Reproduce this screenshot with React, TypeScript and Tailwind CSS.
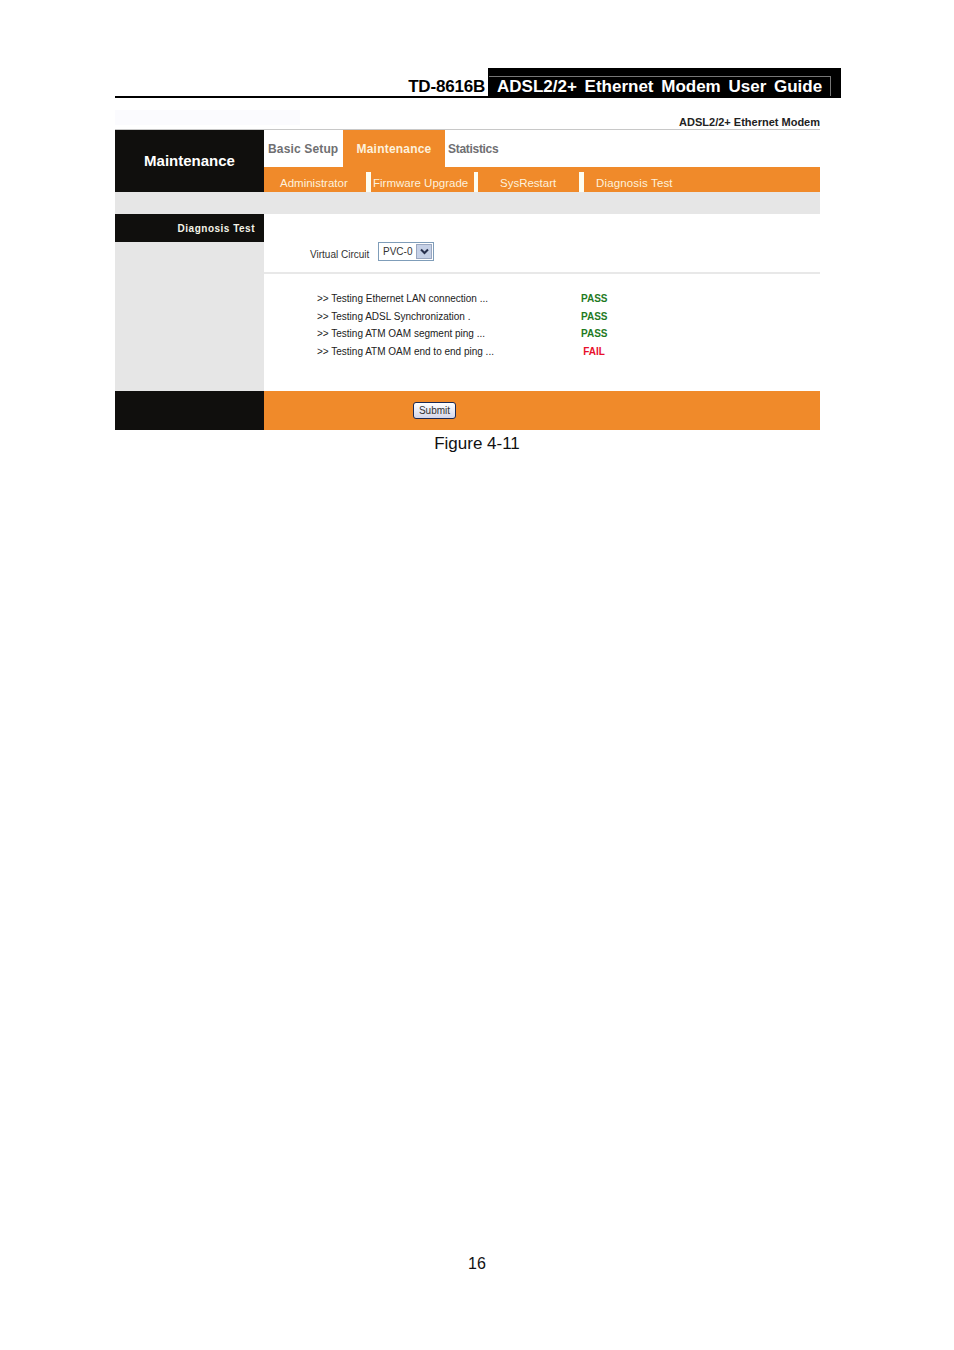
import React from "react";

const arial = "font-['Liberation_Sans',Arial,sans-serif]";

const tests = [
  { label: ">> Testing Ethernet LAN connection ...", ok: true },
  { label: ">> Testing ADSL Synchronization .", ok: true },
  { label: ">> Testing ATM OAM segment ping ...", ok: true },
  { label: ">> Testing ATM OAM end to end ping ...", ok: false },
];

// white tick between sub menu entries
const SubSep = ({ w, ml }: { w: string; ml: string }) => (
  <div className={`${w} ${ml} h-[20px] self-end bg-[#fdfdf0]`} />
);

const DocHeader = () => (
  <div className="ml-[115px] flex h-[30px] w-[726px] items-end">
    <div className="flex h-[30px] w-[373px] items-end justify-end border-b-2 border-black pr-[3px]">
      <span className="translate-y-[1px] text-[17px] font-bold leading-[20px] tracking-[-0.2px] text-black">TD-8616B</span>
    </div>
    <div className="relative flex h-[30px] w-[353px] items-end bg-black pb-[1px] pl-[9px]">
      {/* thin outline inside the black tab */}
      <div className="absolute left-[1px] top-[8px] h-[20px] w-[342px] border-r border-t border-[#777]" />
      <span className="relative text-[17px] font-bold leading-[20px] text-white [word-spacing:3px]">
        ADSL2/2+ Ethernet Modem User Guide
      </span>
    </div>
  </div>
);

const Shot = () => (
  <div className="ml-[115px] mt-[12px] w-[705px]">
    <div className="flex h-[20px] items-end justify-between border-b border-[#c8c8c8]">
      {/* faint smudge left over where the logo was blanked out */}
      <div className="h-[15px] w-[185px] self-start bg-[#fbfbfe]" />
      <span className="text-[11px] font-bold leading-[13px] text-[#222]">ADSL2/2+ Ethernet Modem</span>
    </div>

    <div className="flex">
      <div className="flex h-[62px] w-[149px] items-center justify-center bg-[#100f0d]">
        <span className="text-[15px] font-bold text-white">Maintenance</span>
      </div>
      <div className="w-[556px]">
        <div className="flex h-[37px]">
          <div className="flex w-[79px] items-center pl-[4px]">
            <span className="whitespace-nowrap text-[12px] font-bold tracking-[0.15px] text-[#6f6f72]">Basic Setup</span>
          </div>
          <div className="flex w-[102px] items-center justify-center bg-[#f08a2a]">
            <span className="text-[12px] font-bold tracking-[0.2px] text-[#fdf1dc]">Maintenance</span>
          </div>
          <div className="flex items-center pl-[3px]">
            <span className="text-[12px] font-bold tracking-[-0.3px] text-[#6f6f72]">Statistics</span>
          </div>
        </div>
        <div className="flex h-[25px] items-center whitespace-nowrap bg-[#f08a2a] text-[11.5px] text-[#fdf1dc]">
          <span className="ml-[16px] w-[68px] pt-[8px]">Administrator</span>
          <SubSep w="w-[5px]" ml="ml-[18px]" />
          <span className="ml-[2px] w-[96px] pt-[8px]">Firmware Upgrade</span>
          <SubSep w="w-[4px]" ml="ml-[5px]" />
          <span className="ml-[22px] w-[56px] pt-[8px]">SysRestart</span>
          <SubSep w="w-[5px]" ml="ml-[23px]" />
          <span className="ml-[12px] pt-[8px] tracking-[0.15px]">Diagnosis Test</span>
        </div>
      </div>
    </div>

    <div className="h-[22px] bg-[#e6e6e6]" />

    <div className="flex h-[177px]">
      <div className="w-[149px] bg-[#e6e6e6]">
        <div className="flex h-[28px] items-center justify-end bg-[#100f0d] pr-[9px]">
          <span className="text-[10px] font-bold tracking-[0.5px] text-[#f4f4e8]">Diagnosis Test</span>
        </div>
      </div>
      <div className="w-[556px] bg-white">
        <div className="flex h-[60px] items-center border-b-2 border-[#e8e8e8] pl-[46px] pt-[19px]">
          <span className="w-[68px] translate-y-[2px] text-[10px] leading-[12px] text-[#333]">Virtual Circuit</span>
          <div className="flex h-[19px] w-[56px] -translate-y-[1px] items-center border border-[#7f9db9] bg-white p-[1px]">
            <span className="flex-1 pl-[3px] text-[10px] leading-[12px] text-[#333]">PVC-0</span>
            <span className="flex h-[15px] w-[16px] items-center justify-center border border-[#9aa7c0] bg-[#c5d0e6]">
              <svg width="9" height="7" viewBox="0 0 9 7">
                <path d="M1 1.5 L4.5 5 L8 1.5" fill="none" stroke="#27304d" strokeWidth="2" />
              </svg>
            </span>
          </div>
        </div>
        <div className="pl-[53px] pt-[16px]">
          {tests.map((t) => (
            <div key={t.label} className="flex h-[17.7px] items-center">
              <span className="w-[264px] text-[10px] leading-[12px] text-[#222]">{t.label}</span>
              <span className="w-[26px] text-center text-[10px] font-bold leading-[12px]">
                <span className={t.ok ? "text-[#1f7a1f]" : "text-[#e8102c]"}>{t.ok ? "PASS" : "FAIL"}</span>
              </span>
            </div>
          ))}
        </div>
      </div>
    </div>

    <div className="flex h-[39px]">
      <div className="w-[149px] bg-[#100f0d]" />
      <div className="flex w-[556px] items-center bg-[#f08a2a] pl-[149px]">
        <button className="flex h-[17px] w-[43px] items-center justify-center rounded-[3px] border border-[#1c2a55] bg-gradient-to-b from-white to-[#d4d6ea] text-[10px] leading-[12px] text-[#333]">
          Submit
        </button>
      </div>
    </div>
  </div>
);

export default function App() {
  return (
    <div className={`${arial} h-[1350px] w-[954px] bg-white pt-[68px]`}>
      <DocHeader />
      <Shot />
      <p className="mt-[4px] text-center text-[17px] leading-[19px] text-[#111]">Figure 4-11</p>
      <p className="mt-[801px] text-center text-[16px] leading-[19px] text-[#111]">16</p>
    </div>
  );
}
